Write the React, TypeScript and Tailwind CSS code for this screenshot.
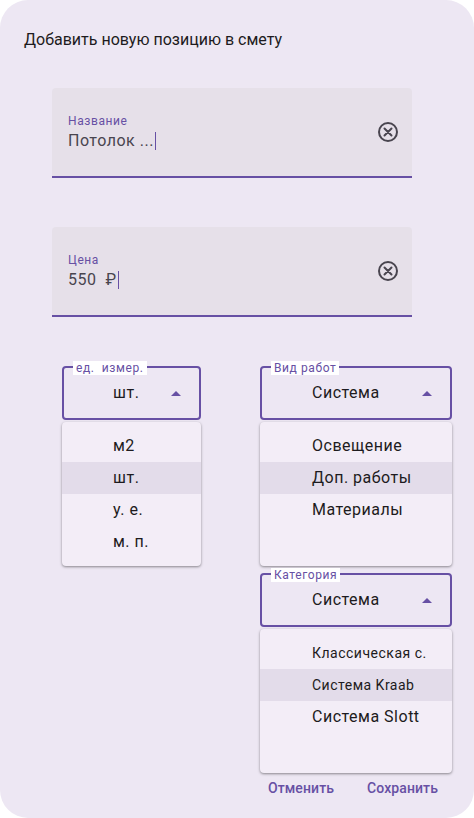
import React from "react";

const font = { fontFamily: "Roboto, 'Noto Sans', sans-serif" };

function ClearIcon() {
  return (
    <svg width="24" height="24" viewBox="0 0 24 24" fill="none">
      <circle cx="12" cy="12" r="9" stroke="#49454F" strokeWidth="2" />
      <path d="M8.5 8.5l7 7M15.5 8.5l-7 7" stroke="#49454F" strokeWidth="2" strokeLinecap="round" />
    </svg>
  );
}

function TextField({ label, value }: { label: string; value: string }) {
  return (
    <div className="flex h-[90px] items-center rounded-t-[4px] border-b-2 border-[#6750A4] bg-[#E6E0E9] pl-4 pr-3">
      <div className="flex flex-1 flex-col pt-[2px]">
        <span className="text-[12px] leading-4 tracking-[0.6px] text-[#6750A4]">{label}</span>
        <span className="flex items-center whitespace-pre text-[16px] leading-6 tracking-[0.5px] text-[#49454F]">
          {value}
          <span className="ml-[1px] inline-block h-[18px] w-[1.5px] bg-[#6750A4]" />
        </span>
      </div>
      <ClearIcon />
    </div>
  );
}

function Arrow() {
  return (
    <svg width="10" height="5" viewBox="0 0 10 5">
      <path d="M0 5L5 0L10 5Z" fill="#6750A4" />
    </svg>
  );
}

function SelectBox({ label, value, padLeft }: { label: string; value: string; padLeft: string }) {
  return (
    <div className="relative flex h-[54px] items-center rounded-[4px] border-2 border-[#6750A4] pr-[18px]">
      <span className="absolute -top-[7px] left-[9px] whitespace-pre bg-white px-[3px] text-[12px] leading-[14px] tracking-[0.6px] text-[#6750A4]">
        {label}
      </span>
      <span className={`flex-1 text-[16px] leading-6 tracking-[0.5px] text-[#1D1B20] ${padLeft}`}>{value}</span>
      <Arrow />
    </div>
  );
}

type Item = { text: string; small?: boolean; active?: boolean };

function Menu({ items, padLeft }: { items: Item[]; padLeft: string }) {
  return (
    <div className="mt-[2px] rounded-[4px] bg-[#F3EDF7] py-2 shadow-[0_1px_3px_rgba(0,0,0,0.3),0_1px_2px_rgba(0,0,0,0.15)]">
      {items.map((it, i) => (
        <div
          key={i}
          className={`flex h-8 items-center tracking-[0.5px] text-[#1D1B20] ${padLeft} ${
            it.small ? "text-[14px]" : "text-[16px]"
          } ${it.active ? "bg-[#E3DCEA]" : ""}`}
        >
          {it.text}
        </div>
      ))}
    </div>
  );
}

export default function App() {
  return (
    <div className="min-h-screen bg-white" style={font}>
      <div className="flex h-[818px] w-[474px] flex-col rounded-[28px] bg-[#EDE7F3]">
        <h1 className="px-6 pt-7 text-[16px] leading-6 text-[#1D1B20]">Добавить новую позицию в смету</h1>

        <div className="mt-9 flex flex-col gap-[49px] pl-[52px] pr-[62px]">
          <TextField label="Название" value="Потолок ..." />
          <TextField label="Цена" value="550  ₽" />
        </div>

        <div className="mt-[49px] flex gap-[59px] pl-[62px]">
          <div className="w-[139px]">
            <SelectBox label="ед.  измер." value="шт." padLeft="pl-[49px]" />
            <Menu
              padLeft="pl-[51px]"
              items={[{ text: "м2" }, { text: "шт.", active: true }, { text: "у. е." }, { text: "м. п." }]}
            />
          </div>

          <div className="w-[192px]">
            <SelectBox label="Вид работ" value="Система" padLeft="pl-[50px]" />
            <Menu
              padLeft="pl-[52px]"
              items={[
                { text: "Освещение" },
                { text: "Доп. работы", active: true },
                { text: "Материалы" },
                { text: "" },
              ]}
            />
            <div className="mt-[7px]">
              <SelectBox label="Категория" value="Система" padLeft="pl-[50px]" />
              <Menu
                padLeft="pl-[52px]"
                items={[
                  { text: "Классическая с.", small: true },
                  { text: "Система Kraab", small: true, active: true },
                  { text: "Система Slott" },
                  { text: "" },
                ]}
              />
            </div>
          </div>
        </div>

        <div className="mt-[5px] flex justify-end gap-[33px] pr-[36px] text-[14px] font-medium leading-5 tracking-[0.1px] text-[#6750A4]">
          <span>Отменить</span>
          <span>Сохранить</span>
        </div>
      </div>
    </div>
  );
}
